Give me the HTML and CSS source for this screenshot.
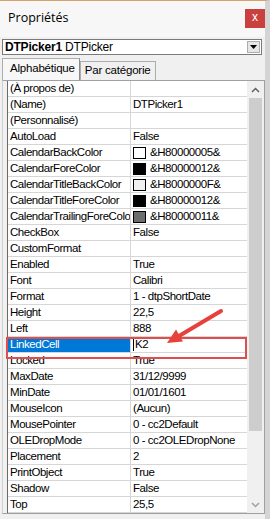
FILE: index.html
```html
<!DOCTYPE html>
<html lang="fr">
<head>
    <meta charset="UTF-8">
    <title>Propriétés</title>
    <link rel="stylesheet" href="styles.css">
</head>
<body>
    <div class="window">
        <div class="titlebar">
            <span class="title">Propriétés</span>
            <span class="close">x</span>
        </div>

        <div class="combo">
            <span class="combo-text"><b>DTPicker1</b> DTPicker</span>
            <span class="combo-btn"><svg width="7" height="4" viewBox="0 0 7 4"><path d="M0 0h7L3.5 4z" fill="#000"/></svg></span>
        </div>

        <div class="tabs">
            <span class="tab active">Alphabétique</span>
            <span class="tab">Par catégorie</span>
        </div>

        <div class="grid-frame">
            <div class="grid">
                <div class="row"><span class="name">(À propos de)</span><span class="value"></span></div>
                <div class="row"><span class="name">(Name)</span><span class="value">DTPicker1</span></div>
                <div class="row"><span class="name">(Personnalisé)</span><span class="value"></span></div>
                <div class="row"><span class="name">AutoLoad</span><span class="value">False</span></div>
                <div class="row"><span class="name">CalendarBackColor</span><span class="value"><i class="swatch white"></i>&amp;H80000005&amp;</span></div>
                <div class="row"><span class="name">CalendarForeColor</span><span class="value"><i class="swatch black"></i>&amp;H80000012&amp;</span></div>
                <div class="row"><span class="name">CalendarTitleBackColor</span><span class="value"><i class="swatch light"></i>&amp;H8000000F&amp;</span></div>
                <div class="row"><span class="name">CalendarTitleForeColor</span><span class="value"><i class="swatch black"></i>&amp;H80000012&amp;</span></div>
                <div class="row"><span class="name">CalendarTrailingForeColo</span><span class="value"><i class="swatch gray"></i>&amp;H80000011&amp;</span></div>
                <div class="row"><span class="name">CheckBox</span><span class="value">False</span></div>
                <div class="row"><span class="name">CustomFormat</span><span class="value"></span></div>
                <div class="row"><span class="name">Enabled</span><span class="value">True</span></div>
                <div class="row"><span class="name">Font</span><span class="value">Calibri</span></div>
                <div class="row"><span class="name">Format</span><span class="value">1 - dtpShortDate</span></div>
                <div class="row"><span class="name">Height</span><span class="value">22,5</span></div>
                <div class="row"><span class="name">Left</span><span class="value">888</span></div>
                <div class="row selected"><span class="name">LinkedCell</span><span class="value"><i class="caret"></i>K2</span></div>
                <div class="row"><span class="name">Locked</span><span class="value">True</span></div>
                <div class="row"><span class="name">MaxDate</span><span class="value">31/12/9999</span></div>
                <div class="row"><span class="name">MinDate</span><span class="value">01/01/1601</span></div>
                <div class="row"><span class="name">MouseIcon</span><span class="value">(Aucun)</span></div>
                <div class="row"><span class="name">MousePointer</span><span class="value">0 - cc2Default</span></div>
                <div class="row"><span class="name">OLEDropMode</span><span class="value">0 - cc2OLEDropNone</span></div>
                <div class="row"><span class="name">Placement</span><span class="value">2</span></div>
                <div class="row"><span class="name">PrintObject</span><span class="value">True</span></div>
                <div class="row"><span class="name">Shadow</span><span class="value">False</span></div>
                <div class="row"><span class="name">Top</span><span class="value">25,5</span></div>

                <div class="highlight"></div>
                <svg class="arrow" width="80" height="50" viewBox="0 0 80 50">
                    <path d="M58 4 L16 29" stroke="#e8403a" stroke-width="4" stroke-linecap="round" fill="none"/>
                    <path d="M4 36 L13 22.5 L20 34.5 Z" fill="#e8403a"/>
                </svg>
            </div>
            <div class="scrollbar">
                <span class="sb-btn"><svg width="9" height="6" viewBox="0 0 9 6"><path d="M1 5L4.5 1.5L8 5" stroke="#606060" stroke-width="1.5" fill="none"/></svg></span>
                <span class="sb-track"><span class="sb-thumb"></span></span>
                <span class="sb-btn"><svg width="9" height="6" viewBox="0 0 9 6"><path d="M1 1L4.5 4.5L8 1" stroke="#a0a0a0" stroke-width="1.5" fill="none"/></svg></span>
            </div>
        </div>
    </div>
</body>
</html>
```

FILE: styles.css
```css
* {
    margin: 0;
    padding: 0;
    box-sizing: border-box;
}

body {
    width: 270px;
    height: 519px;
    overflow: hidden;
    background: #f0f0f0;
    font-family: "Liberation Sans", Arial, sans-serif;
    font-size: 11px;
    color: #000;
}

.window {
    height: 519px;
    border-top: 1px solid #d9a06a;
    border-right: 5px solid #d4d4d4;
    display: flex;
    flex-direction: column;
}

/* === BARRE DE TITRE === */
.titlebar {
    height: 36px;
    display: flex;
    align-items: flex-start;
    justify-content: space-between;
    background: #f7f7f7;
}

.title {
    font-family: "Open Sans", sans-serif;
    font-size: 12.5px;
    margin: 8px 0 0 8px;
}

.close {
    width: 20px;
    height: 19px;
    margin-top: 8px;
    background: #c9403e;
    color: #fff;
    font-size: 12px;
    text-align: center;
    line-height: 17px;
}

/* === COMBO OBJET === */
.combo {
    height: 16px;
    margin: 2px 3px 0 2px;
    background: #fff;
    border: 1px solid #7a7a7a;
    display: flex;
    align-items: center;
    justify-content: space-between;
    padding-left: 2px;
    font-size: 12px;
    letter-spacing: -0.2px;
}

.combo-btn {
    width: 13px;
    height: 12px;
    margin-right: 1px;
    background: #e6e6e6;
    border: 1px solid #adadad;
    display: flex;
    align-items: center;
    justify-content: center;
}

/* === ONGLETS === */
.tabs {
    height: 22px;
    margin: 3px 0 0 2px;
    display: flex;
    align-items: flex-end;
}

.tab {
    height: 19px;
    padding: 2px 4px 0;
    border: 1px solid #adadad;
    border-bottom: none;
    font-size: 11.5px;
    letter-spacing: -0.2px;
}

.tab.active {
    height: 22px;
    padding-top: 3px;
    padding-left: 7px;
    background: #f7f7f7;
    border-right: 1px solid #8a8a8a;
}

/* === GRILLE DES PROPRIETES === */
.grid-frame {
    flex: 1;
    margin: 0 0 5px 2px;
    padding-left: 4px;
    border: 1px solid #a0a0a0;
    border-left: 1px solid #d0d0d0;
    display: flex;
}

.grid {
    position: relative;
    flex: 1;
    border-left: 1px solid #696969;
    background: #fff;
    font-size: 11.5px;
    letter-spacing: -0.45px;
}

.row {
    height: 16px;
    display: flex;
    border-bottom: 1px solid #d6d6d6;
    line-height: 15px;
}

.name {
    width: 123px;
    padding-left: 2px;
    border-right: 1px solid #d6d6d6;
    white-space: nowrap;
    overflow: hidden;
}

.value {
    flex: 1;
    padding-left: 2px;
    display: flex;
    align-items: center;
    white-space: nowrap;
}

.row.selected .name {
    background: #0078d7;
    color: #fff;
}

.caret {
    width: 1px;
    height: 13px;
    margin-right: 1px;
    background: #000;
}

.swatch {
    width: 13px;
    height: 12px;
    margin-right: 4px;
    border: 1px solid #000;
}

.swatch.white { background: #fff; }
.swatch.black { background: #000; }
.swatch.light { background: #f0f0f0; }
.swatch.gray { background: #6d6d6d; }

/* annotation rouge */
.highlight {
    position: absolute;
    left: -2px;
    top: 256px;
    width: 241px;
    height: 22px;
    border: 2px solid #dd4f4f;
}

.arrow {
    position: absolute;
    left: 155px;
    top: 226px;
}

/* === BARRE DE DEFILEMENT === */
.scrollbar {
    width: 17px;
    display: flex;
    flex-direction: column;
    background: #f0f0f0;
}

.sb-btn {
    height: 17px;
    display: flex;
    align-items: center;
    justify-content: center;
}

.sb-track {
    flex: 1;
    padding: 0 2px;
}

.sb-thumb {
    display: block;
    height: 333px;
    background: #cdcdcd;
}
```
